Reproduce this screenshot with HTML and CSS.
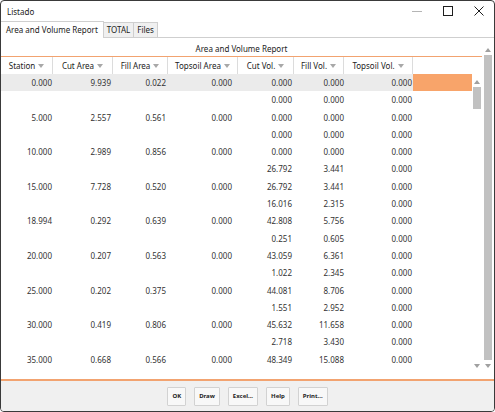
FILE: index.html
```html
<!DOCTYPE html>
<html lang="en">
<head>
    <meta charset="UTF-8">
    <title>Listado</title>
    <link rel="stylesheet" href="styles.css">
</head>
<body>
    <div class="window">
        <div class="titlebar">
            <span class="title">Listado</span>
            <div class="controls">
                <div class="ctl"><svg width="10" height="10" viewBox="0 0 10 10"><line x1="0" y1="5.5" x2="10" y2="5.5" stroke="#b5b5b5" stroke-width="1"/></svg></div>
                <div class="ctl"><svg width="10" height="10" viewBox="0 0 10 10"><rect x="0.5" y="0.5" width="9" height="9" fill="none" stroke="#1e1e1e" stroke-width="1"/></svg></div>
                <div class="ctl"><svg width="10" height="10" viewBox="0 0 10 10"><path d="M0.5 0.5 L9.5 9.5 M9.5 0.5 L0.5 9.5" stroke="#1e1e1e" stroke-width="1"/></svg></div>
            </div>
        </div>

        <div class="tabs">
            <div class="tab active">Area and Volume Report</div>
            <div class="tab">TOTAL</div>
            <div class="tab">Files</div>
        </div>

        <div class="panel">
            <div class="report-main">
                <div class="report-title">Area and Volume Report</div>
                <div class="grid-head">
                    <div class="hcell">Station</div>
                    <div class="hcell">Cut Area</div>
                    <div class="hcell">Fill Area</div>
                    <div class="hcell">Topsoil Area</div>
                    <div class="hcell">Cut Vol.</div>
                    <div class="hcell">Fill Vol.</div>
                    <div class="hcell">Topsoil Vol.</div>
                    <div class="hcell blank"></div>
                </div>
                <div class="grid-body">
                    <div class="rows">
                        <div class="row current"><span>0.000</span><span>9.939</span><span>0.022</span><span>0.000</span><span>0.000</span><span>0.000</span><span>0.000</span><span class="pick"></span></div>
                        <div class="row"><span></span><span></span><span></span><span></span><span>0.000</span><span>0.000</span><span>0.000</span><span></span></div>
                        <div class="row"><span>5.000</span><span>2.557</span><span>0.561</span><span>0.000</span><span>0.000</span><span>0.000</span><span>0.000</span><span></span></div>
                        <div class="row"><span></span><span></span><span></span><span></span><span>0.000</span><span>0.000</span><span>0.000</span><span></span></div>
                        <div class="row"><span>10.000</span><span>2.989</span><span>0.856</span><span>0.000</span><span>0.000</span><span>0.000</span><span>0.000</span><span></span></div>
                        <div class="row"><span></span><span></span><span></span><span></span><span>26.792</span><span>3.441</span><span>0.000</span><span></span></div>
                        <div class="row"><span>15.000</span><span>7.728</span><span>0.520</span><span>0.000</span><span>26.792</span><span>3.441</span><span>0.000</span><span></span></div>
                        <div class="row"><span></span><span></span><span></span><span></span><span>16.016</span><span>2.315</span><span>0.000</span><span></span></div>
                        <div class="row"><span>18.994</span><span>0.292</span><span>0.639</span><span>0.000</span><span>42.808</span><span>5.756</span><span>0.000</span><span></span></div>
                        <div class="row"><span></span><span></span><span></span><span></span><span>0.251</span><span>0.605</span><span>0.000</span><span></span></div>
                        <div class="row"><span>20.000</span><span>0.207</span><span>0.563</span><span>0.000</span><span>43.059</span><span>6.361</span><span>0.000</span><span></span></div>
                        <div class="row"><span></span><span></span><span></span><span></span><span>1.022</span><span>2.345</span><span>0.000</span><span></span></div>
                        <div class="row"><span>25.000</span><span>0.202</span><span>0.375</span><span>0.000</span><span>44.081</span><span>8.706</span><span>0.000</span><span></span></div>
                        <div class="row"><span></span><span></span><span></span><span></span><span>1.551</span><span>2.952</span><span>0.000</span><span></span></div>
                        <div class="row"><span>30.000</span><span>0.419</span><span>0.806</span><span>0.000</span><span>45.632</span><span>11.658</span><span>0.000</span><span></span></div>
                        <div class="row"><span></span><span></span><span></span><span></span><span>2.718</span><span>3.430</span><span>0.000</span><span></span></div>
                        <div class="row"><span>35.000</span><span>0.668</span><span>0.566</span><span>0.000</span><span>48.349</span><span>15.088</span><span>0.000</span><span></span></div>
                    </div>
                    <div class="vscroll inner">
                        <div class="arrow up"></div>
                        <div class="thumb"></div>
                        <div class="track"></div>
                        <div class="arrow down"></div>
                    </div>
                </div>
            </div>
            <div class="vscroll outer">
                <div class="arrow up"></div>
                <div class="thumb"></div>
                <div class="arrow down"></div>
            </div>
        </div>

        <div class="footer">
            <button class="btn">OK</button>
            <button class="btn">Draw</button>
            <button class="btn">Excel...</button>
            <button class="btn">Help</button>
            <button class="btn">Print...</button>
        </div>
    </div>
</body>
</html>
```

FILE: styles.css
```css
body {
    margin: 0;
    font-family: "Noto Sans", "Open Sans", sans-serif;
    font-size: 8px;
    color: #222;
    background: #fff;
}
.window {
    width: 495px;
    height: 412px;
    box-sizing: border-box;
    border: 1px solid #3a3a3a;
    border-radius: 4px;
    background: #fff;
    display: flex;
    flex-direction: column;
    overflow: hidden;
}
.titlebar {
    height: 20px;
    flex: none;
    display: flex;
    align-items: center;
    justify-content: space-between;
    padding-left: 6px;
}
.controls {
    display: flex;
    height: 100%;
}
.ctl {
    width: 31px;
    display: flex;
    align-items: center;
    justify-content: center;
}
.tabs {
    height: 16px;
    flex: none;
    display: flex;
    align-items: flex-end;
    border-bottom: 1px solid #cfcfcf;
}
.tab {
    height: 14px;
    line-height: 14px;
    padding: 0 3px;
    background: #f0f0f0;
    border: 1px solid #cfcfcf;
    border-bottom: none;
    margin-left: -1px;
}
.tab.active {
    height: 16px;
    line-height: 16px;
    padding: 0 5px;
    background: #fff;
    margin-left: 0;
    margin-bottom: -1px;
    border-left: none;
}

/* report area */
.panel {
    height: 341px;
    flex: none;
    display: flex;
    background: #fff;
}
.report-main {
    width: 481px;
    display: flex;
    flex-direction: column;
}
.report-title {
    height: 14px;
    line-height: 14px;
    padding-top: 4px;
    text-align: center;
    border-bottom: 1px solid #f2a370;
}
.grid-head, .row {
    display: grid;
    grid-template-columns: 52px 60px 55px 70px 56px 50px 69px 59px;
}
.grid-head {
    height: 17px;
}
.hcell {
    display: flex;
    align-items: center;
    justify-content: center;
    border-right: 1px solid #dcdcdc;
    color: #222;
}
.hcell::after {
    content: "";
    margin-left: 3px;
    border-left: 3px solid transparent;
    border-right: 3px solid transparent;
    border-top: 4px solid #a8a8a8;
}
.hcell.blank {
    border-right: none;
}
.hcell.blank::after {
    display: none;
}
.grid-body {
    flex: 1;
    display: flex;
}
.rows {
    width: 471px;
}
.row {
    height: 17.3px;
    line-height: 17.3px;
    color: #333;
}
.row span {
    text-align: right;
    padding-right: 1px;
}
.row span:nth-child(2),
.row span:nth-child(3),
.row span:nth-child(5) {
    padding-right: 2px;
}
.row span:nth-child(4) {
    padding-right: 6px;
}
.row span:nth-child(6) {
    padding-right: 0;
}
.row.current {
    background: #ebebeb;
}
.row .pick {
    background: #f8a46a;
}

/* scrollbars */
.vscroll {
    display: flex;
    flex-direction: column;
    align-items: center;
}
.vscroll.inner {
    width: 10px;
    padding-top: 4px;
    padding-bottom: 9px;
}
.vscroll.outer {
    width: 12px;
    padding-top: 8px;
    padding-bottom: 9px;
}
.arrow {
    height: 8px;
    width: 8px;
    display: flex;
    align-items: center;
    justify-content: center;
}
.arrow::after {
    content: "";
    border-left: 3.5px solid transparent;
    border-right: 3.5px solid transparent;
}
.arrow.up::after {
    border-bottom: 4px solid #a0a0a0;
}
.arrow.down::after {
    border-top: 4px solid #a0a0a0;
}
.thumb {
    width: 8px;
    background: #c1c1c1;
    margin-top: 1px;
}
.inner .thumb {
    height: 22px;
}
.inner .track {
    flex: 1;
}
.outer .thumb {
    flex: 1;
    margin-bottom: 2px;
}

/* buttons */
.footer {
    flex: 1;
    border-top: 2px solid #f2a370;
    background: #f0f0f0;
    display: flex;
    align-items: center;
    justify-content: center;
    gap: 8px;
}
.btn {
    height: 19px;
    padding: 0 4px;
    font-family: "Noto Sans", "Open Sans", sans-serif;
    font-size: 6px;
    font-weight: bold;
    color: #222;
    background: #f8f8f8;
    border: 1px solid #d2d2d2;
    border-radius: 1px;
}
```
